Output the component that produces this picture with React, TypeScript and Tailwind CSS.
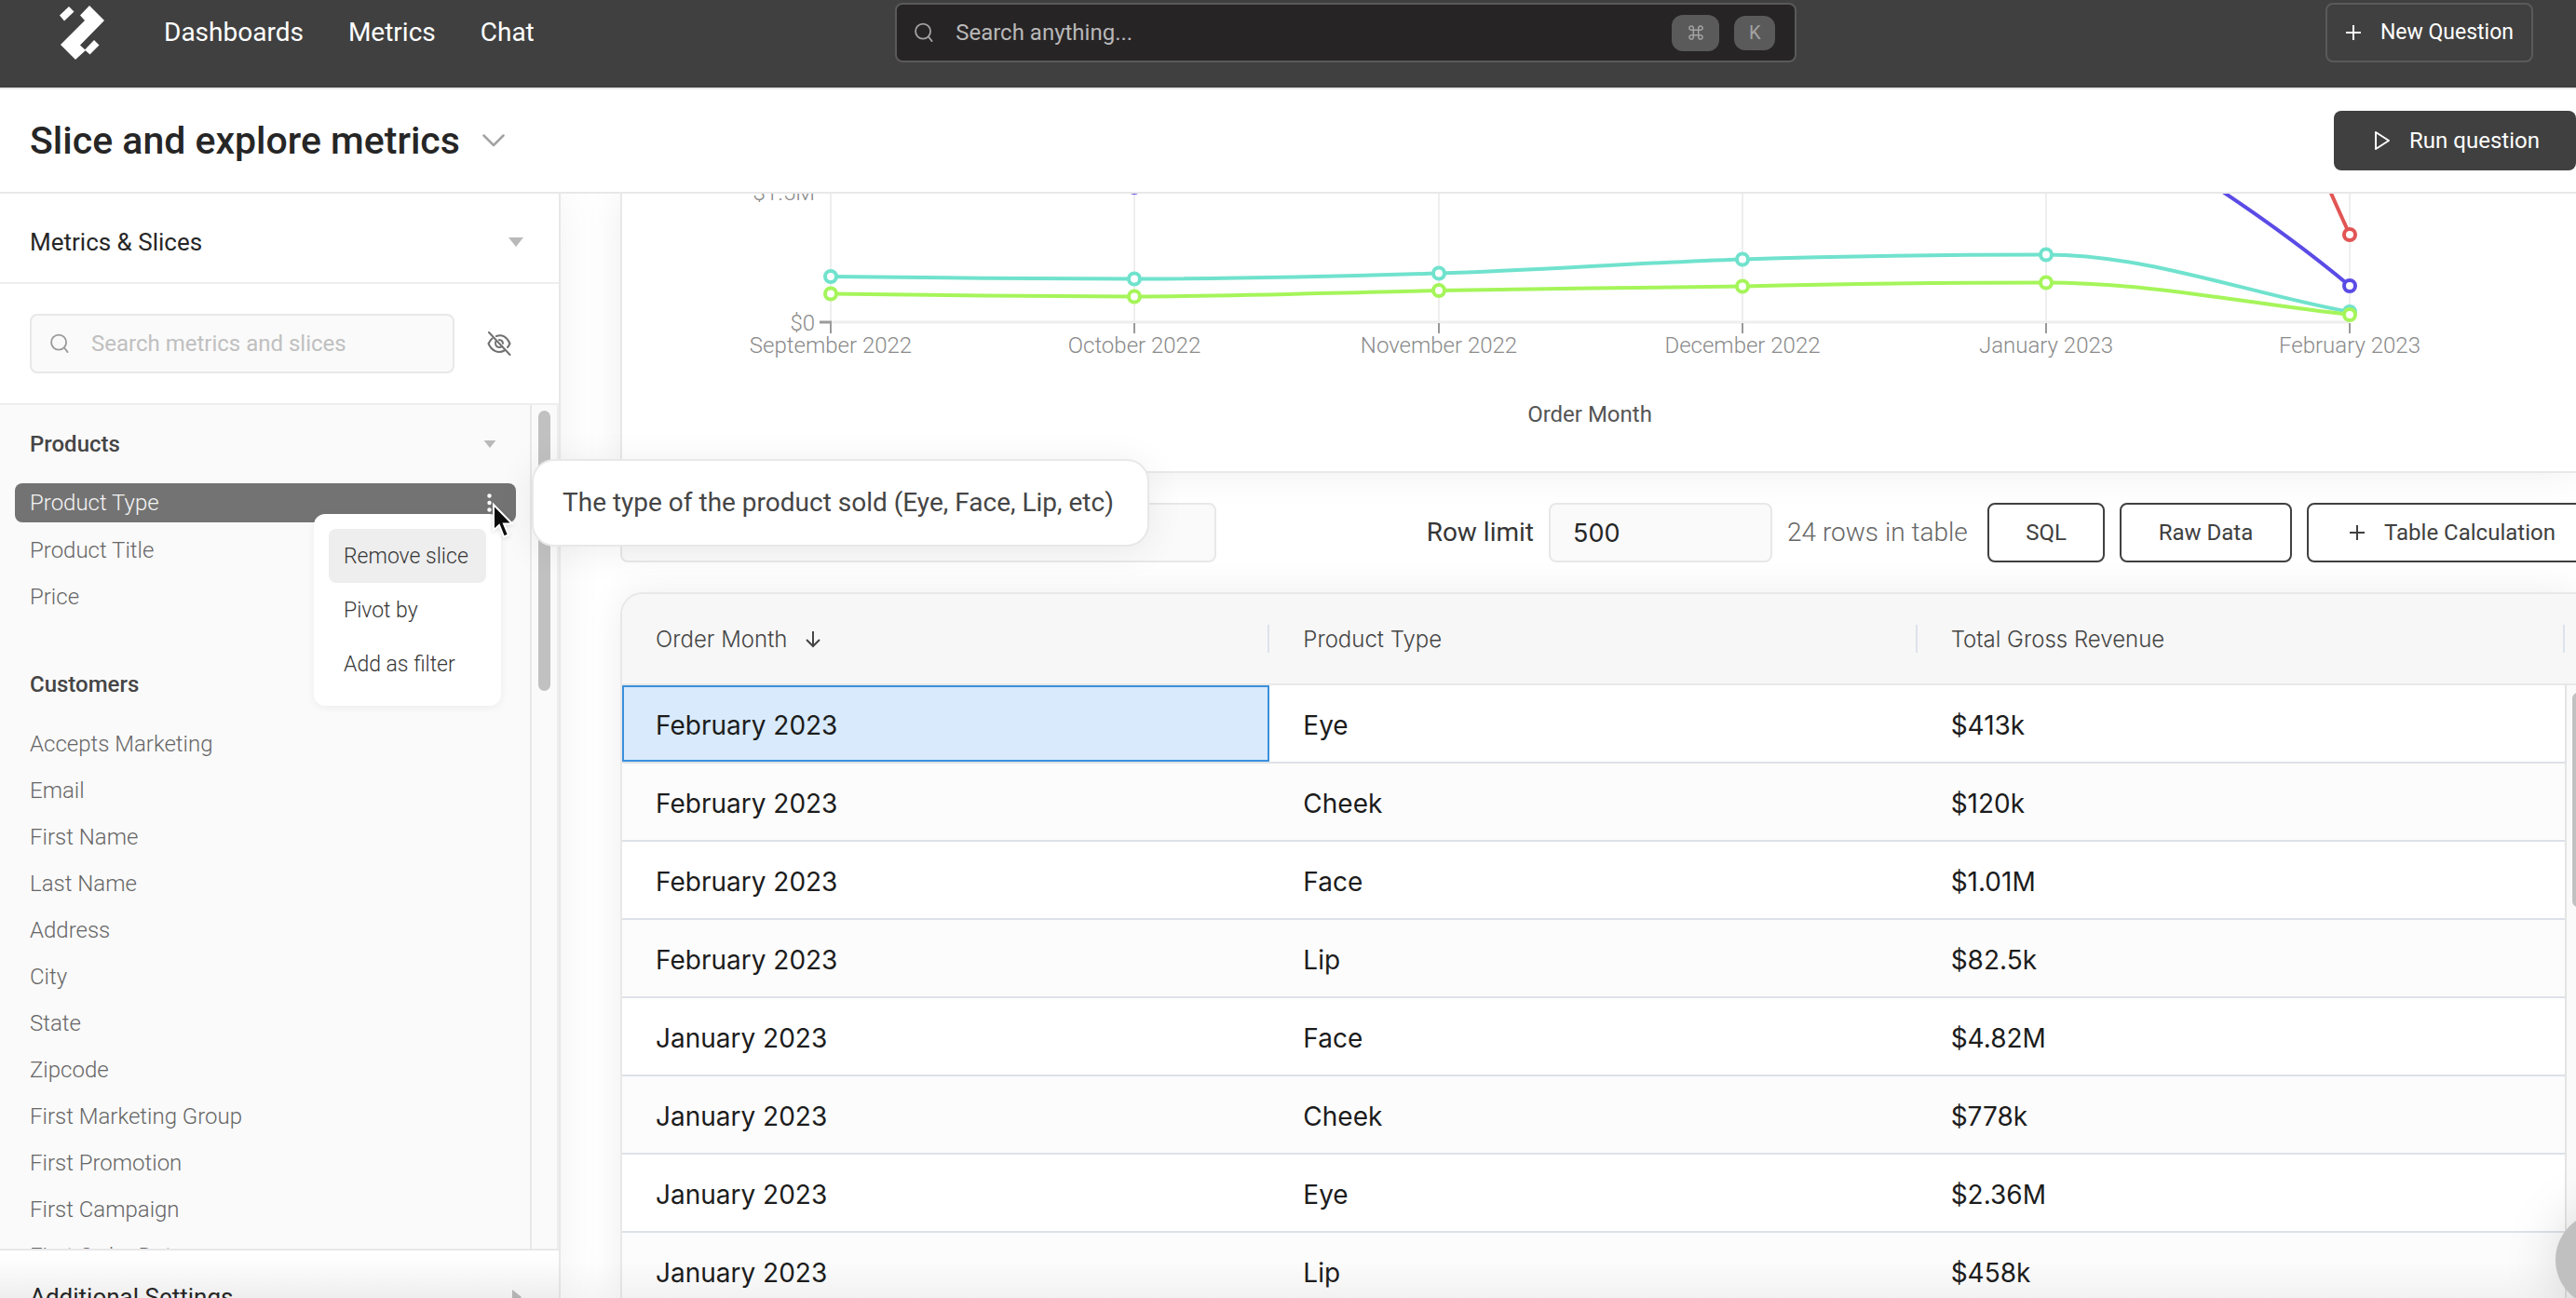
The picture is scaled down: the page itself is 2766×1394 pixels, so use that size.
import React from "react";

const CUSTOMER_SLICES = [
  "Accepts Marketing", "Email", "First Name", "Last Name", "Address", "City", "State", "Zipcode",
  "First Marketing Group", "First Promotion", "First Campaign", "First Order Date",
];

const ROWS = [
  ["February 2023", "Eye", "$413k"],
  ["February 2023", "Cheek", "$120k"],
  ["February 2023", "Face", "$1.01M"],
  ["February 2023", "Lip", "$82.5k"],
  ["January 2023", "Face", "$4.82M"],
  ["January 2023", "Cheek", "$778k"],
  ["January 2023", "Eye", "$2.36M"],
  ["January 2023", "Lip", "$458k"],
];

const MONTHS = ["September 2022", "October 2022", "November 2022", "December 2022", "January 2023", "February 2023"];
const MONTH_X = [224, 550, 877, 1203, 1529, 1855];

function Logo() {
  return (
    <svg viewBox="0 0 48 58" className="h-[58px] w-12 fill-white" aria-label="Home">
      <path d="M10 1 L15.500 6.500 L5 16.500 L0 10.500 Z" />
      <path d="M32 0 L48 16 L22 42.500 L28 48 L17 58 L1 42 L27 16 L22 10.500 Z" />
      <path d="M37 37 L42.500 42.500 L32.500 52.500 L27 47.500 Z" />
    </svg>
  );
}

function SearchIcon({ className }: { className: string }) {
  return (
    <svg viewBox="0 0 22 24" className={className} fill="none" stroke="currentColor" strokeWidth="2" strokeLinecap="round">
      <circle cx="10" cy="10.500" r="8.800" />
      <path d="M16.500 17 L20.500 22" />
    </svg>
  );
}

function PlusIcon({ className }: { className: string }) {
  return (
    <svg viewBox="0 0 18 18" className={className} fill="none" stroke="currentColor" strokeWidth="2">
      <path d="M9 1 V17 M1 9 H17" />
    </svg>
  );
}

function EyeOffIcon() {
  return (
    <svg viewBox="0 0 26 26" className="size-[26px]" fill="none" stroke="#707070" strokeWidth="2" strokeLinecap="round">
      <path d="M2 1 L24.500 25" />
      <path d="M10 5 C16 2.500 21.500 6 24.500 13 C23.800 14.500 23 15.800 22 17" />
      <path d="M5.500 7.500 C3.800 9 2.500 11 1.500 13 C5 21 12 24 18.500 20.500" />
      <path d="M9.500 10.500 C8 13 9.500 17 13 17 C14.200 17 15.200 16.500 15.800 15.800" />
      <path d="M13 9 C15.500 9.200 16.800 10.800 17 12.800" />
    </svg>
  );
}

function Triangle({ className }: { className: string }) {
  return (
    <svg viewBox="0 0 16 10" className={className} fill="#b9b9b9">
      <path d="M0 0 H16 L8 10 Z" />
    </svg>
  );
}

function Cursor() {
  return (
    <svg viewBox="0 0 24 38" className="pointer-events-none absolute top-[22px] left-[512px] z-30 h-[38px] w-6 overflow-visible drop-shadow-sm">
      <path d="M2 1 V28.500 L8 23 L13 35.500 L18 33.500 L13 21.500 H22 Z" fill="#0a0a0a" stroke="#fff" strokeWidth="2" />
    </svg>
  );
}

function Header() {
  return (
    <header className="flex h-24 shrink-0 items-start border-b-2 border-[#e8e8e8] bg-[#404040] text-white">
      <div className="flex w-[34.75%] items-center pt-1.5 pl-16">
        <Logo />
        <nav className="ml-16 flex gap-12 text-[28px] leading-8">
          <a href="#dashboards">Dashboards</a>
          <a href="#metrics">Metrics</a>
          <a href="#chat">Chat</a>
        </nav>
      </div>
      <label className="mt-[3px] flex h-16 w-[35%] items-center rounded-lg border-2 border-[#5a5a5a] bg-[#272425] pr-[21px] pl-[19px] text-[#a3a3a3]">
        <SearchIcon className="h-[22px] w-5" />
        <input aria-label="Search anything" placeholder="Search anything..." className="ml-6 min-w-0 flex-1 bg-transparent text-[24px] outline-none placeholder:text-[#b8b8b8]" />
        <kbd className="flex h-[39px] w-[51px] items-center justify-center rounded-xl bg-[#5a5a5a]">
          <svg viewBox="0 0 16 16" className="size-4" fill="none" stroke="currentColor" strokeWidth="1.500">
            <path d="M5.300 5.300 H10.700 V10.700 H5.300 Z M5.300 5.300 H3.200 A2.200 2.200 0 1 1 5.300 3.200 Z M10.700 5.300 V3.200 A2.200 2.200 0 1 1 12.800 5.300 Z M10.700 10.700 H12.800 A2.200 2.200 0 1 1 10.700 12.800 Z M5.300 10.700 V12.800 A2.200 2.200 0 1 1 3.200 10.700 Z" />
          </svg>
        </kbd>
        <kbd className="ml-4 flex h-[37px] w-11 items-center justify-center rounded-xl bg-[#5a5a5a] font-[Roboto,sans-serif] text-[20px] leading-6">K</kbd>
      </label>
      <div className="flex flex-1 justify-end pt-[3px] pr-[46px]">
        <button className="flex h-16 w-[223px] items-center justify-center rounded-lg border-2 border-[#5a5a5a] text-[23px] leading-8">
          <PlusIcon className="mr-5 size-[18px]" />
          New Question
        </button>
      </div>
    </header>
  );
}

function TitleBar() {
  return (
    <div className="flex h-28 shrink-0 items-center justify-between border-b-2 border-[#e8e8e8] bg-white pl-8">
      <button className="flex items-center gap-6">
        <h1 className="text-[41px] leading-[48px] font-medium text-[#262626]">Slice and explore metrics</h1>
        <svg viewBox="0 0 24 14" className="h-3.5 w-6" fill="none" stroke="#a3a3a3" strokeWidth="2.500" strokeLinecap="round" strokeLinejoin="round">
          <path d="M1.500 1.500 L12 12 L22.500 1.500" />
        </svg>
      </button>
      <button className="flex h-16 w-[260px] items-center justify-center rounded-lg bg-[#404040] pl-1 text-[24px] leading-8 text-white">
        <svg viewBox="0 0 18 22" className="mr-5 h-[22px] w-[18px]" fill="none" stroke="currentColor" strokeWidth="2" strokeLinejoin="round">
          <path d="M2 2 L16 11 L2 20 Z" />
        </svg>
        Run question
      </button>
    </div>
  );
}

function SliceItem({ label }: { label: string }) {
  return (
    <li>
      <button className="block h-[50px] w-full px-4 text-left leading-[52px]">{label}</button>
    </li>
  );
}

function SliceMenu() {
  return (
    <div role="menu" className="absolute top-[33px] left-[321px] z-20 w-[201px] rounded-xl bg-white p-4 text-[23px] leading-[60px] text-[#363636] shadow-[0_2px_8px_rgba(0,0,0,0.06)]">
      <button role="menuitem" className="block h-[58px] w-full rounded-lg bg-[#eeeeee] pl-4 text-left">Remove slice</button>
      <button role="menuitem" className="block h-[58px] w-full pl-4 text-left">Pivot by</button>
      <button role="menuitem" className="block h-[58px] w-full pl-4 text-left">Add as filter</button>
    </div>
  );
}

function Sidebar() {
  return (
    <aside className="relative z-10 flex w-[602px] shrink-0 flex-col border-r-2 border-[#e8e8e8] bg-white shadow-[0_0_48px_rgba(0,0,0,0.06)]">
      <button className="flex h-[97px] shrink-0 items-center justify-between border-b-2 border-[#eeeeee] pt-2 pr-[38px] pl-8">
        <span className="text-[26px] leading-8 text-[#262626]">Metrics &amp; Slices</span>
        <Triangle className="h-2.5 w-4" />
      </button>
      <div className="flex h-[130px] shrink-0 items-center border-b-2 border-[#eeeeee] pl-8">
        <label className="flex h-16 w-[456px] items-center rounded-lg border-2 border-[#e8e8e8] bg-[#fafafa] pl-5 text-[#9a9a9a]">
          <SearchIcon className="h-[22px] w-5" />
          <input aria-label="Search metrics and slices" placeholder="Search metrics and slices" className="ml-6 min-w-0 flex-1 bg-transparent text-[24px] outline-none placeholder:text-[#c0c0c0]" />
        </label>
        <button aria-label="Hide unused" className="ml-[35px]">
          <EyeOffIcon />
        </button>
      </div>
      <div className="flex min-h-0 flex-1 overflow-hidden bg-[#fafafa]">
        <div className="w-[571px] border-r-2 border-[#e8e8e8] pt-4 pr-[15px] pl-4 text-[24px] font-light text-[#666666]">
          <button className="flex h-[52px] w-full items-center justify-between pr-[21px] pl-4">
            <span className="font-medium text-[#454545]">Products</span>
            <Triangle className="h-2 w-3.5" />
          </button>
          <ul className="mt-4">
            <li className="relative h-[46px]">
              <div className="flex h-[42px] items-center justify-between rounded-lg bg-[#737373] pr-[26px] pl-4 text-[#f5f5f5]">
                <button className="leading-[44px]">Product Type</button>
                <button aria-label="Slice options">
                  <svg viewBox="0 0 5 20" className="h-5 w-[5px]" fill="#fff">
                    <circle cx="2.500" cy="2.500" r="2.200" />
                    <circle cx="2.500" cy="10" r="2.200" />
                    <circle cx="2.500" cy="17.500" r="2.200" />
                  </svg>
                </button>
              </div>
              <SliceMenu />
              <Cursor />
            </li>
            <SliceItem label="Product Title" />
            <SliceItem label="Price" />
          </ul>
          <button className="mt-11 flex h-[52px] w-full items-center pl-4 font-medium text-[#454545]">Customers</button>
          <ul className="mt-3">
            {CUSTOMER_SLICES.map((label) => (
              <SliceItem key={label} label={label} />
            ))}
          </ul>
        </div>
        <div className="flex-1 border-r-2 border-[#eeeeee] px-[7px] pt-1.5">
          <div className="h-[301px] rounded-full bg-[#c1c1c1]" />
        </div>
      </div>
      <button className="relative -mb-[45px] flex h-[98px] shrink-0 items-center justify-between border-t-2 border-[#e8e8e8] bg-linear-to-b from-white to-[#f2f2f2] pt-1 pr-[40px] pl-8">
        <span className="text-[26px] leading-8 text-[#262626]">Additional Settings</span>
        <svg viewBox="0 0 10 16" className="h-4 w-2.5" fill="#b9b9b9">
          <path d="M0 0 L10 8 L0 16 Z" />
        </svg>
      </button>
      <div role="tooltip" className="absolute top-[285px] left-[571px] rounded-3xl border-2 border-[#e8e8e8] bg-white py-[29px] pr-9 pl-[31px] text-[28px] leading-8 whitespace-nowrap text-[#454545] shadow-[0_4px_40px_rgba(0,0,0,0.07)]">
        The type of the product sold (Eye, Face, Lip, etc)
      </div>
    </aside>
  );
}

function Series({ color, d, points }: { color: string; d: string; points: number[][] }) {
  return (
    <g stroke={color} strokeWidth="4">
      <path d={d} fill="none" />
      {points.map(([x, y]) => (
        <circle key={x} cx={x} cy={y} r="6" fill="#fff" />
      ))}
    </g>
  );
}

function Chart() {
  return (
    <section className="overflow-hidden border-b-2 border-l-2 border-[#e8e8e8] bg-white shadow-[0_0_40px_rgba(0,0,0,0.07)]">
      <svg viewBox="0 0 2098 298" className="block w-full font-[Roboto,sans-serif]" fontSize="24">
        <g stroke="#eeeeee" strokeWidth="2">
          {MONTH_X.map((x) => (
            <path key={x} d={`M${x} 0 V138`} />
          ))}
          <path d="M224 138 H1855" strokeWidth="3" />
        </g>
        <g stroke="#9a9a9a" strokeWidth="2">
          {MONTH_X.map((x) => (
            <path key={x} d={`M${x} 139 V150`} />
          ))}
          <path d="M212 138 H225" strokeWidth="3" />
        </g>
        <g fill="#8a8a8a" fontWeight="300">
          <text x="207" y="7" textAnchor="end">$1.5M</text>
          <text x="207" y="147" textAnchor="end">$0</text>
          {MONTHS.map((m, i) => (
            <text key={m} x={MONTH_X[i]} y="171" textAnchor="middle">{m}</text>
          ))}
        </g>
        <text x="1039" y="245" textAnchor="middle" fill="#555555">Order Month</text>
        <Series color="#e25555" d="M1799 -120 C1806 -60 1826 -20 1855 44" points={[[1855, 44]]} />
        <Series color="#5b4be6" d="M1660 -40 C1740 10 1806 58 1855 99" points={[[550, -7], [1855, 99]]} />
        <Series
          color="#70e2cd"
          d="M224 89 C333 90 441 91.500 550 91.500 C659 91.500 768 89 877 85.500 C986 82 1094 74 1203 70.500 C1312 67 1420 65.500 1529 65.500 C1638 65.500 1746 107 1855 127"
          points={[[224, 89], [550, 91.5], [877, 85.5], [1203, 70.5], [1529, 65.5], [1855, 127]]}
        />
        <Series
          color="#a5f55a"
          d="M224 107.500 C333 109 441 110.500 550 110.500 C659 110.500 768 106 877 104 C986 102 1094 101 1203 99.500 C1312 97 1420 95.500 1529 95.500 C1638 95.500 1746 118 1855 130"
          points={[[224, 107.5], [550, 110.5], [877, 104], [1203, 99.5], [1529, 95.5], [1855, 130]]}
        />
      </svg>
    </section>
  );
}

function Toolbar() {
  return (
    <div className="mt-8 -mr-[23px] flex h-16 items-center gap-4 text-[28px] leading-8">
      <select aria-label="Visible columns" className="h-16 w-[640px] appearance-none rounded-lg border-2 border-[#e8e8e8] bg-[#fafafa]" />
      <label className="ml-auto flex items-center gap-4 text-[#363636]">
        Row limit
        <input defaultValue="500" className="h-16 w-60 rounded-lg border-2 border-[#e8e8e8] bg-[#fafafa] px-6 font-[Inter,sans-serif] text-[27px] text-[#262626]" />
      </label>
      <span className="w-[199px] font-light whitespace-nowrap text-[#666666]">24 rows in table</span>
      <button className="h-16 w-[126px] rounded-lg border-2 border-[#404040] bg-white text-[24px] text-[#404040]">SQL</button>
      <button className="h-16 w-[185px] rounded-lg border-2 border-[#404040] bg-white text-[24px] text-[#404040]">Raw Data</button>
      <button className="flex h-16 w-[312px] items-center justify-center rounded-lg border-2 border-[#404040] bg-white text-[24px] text-[#404040]">
        <PlusIcon className="mr-5 size-[18px]" />
        Table Calculation
      </button>
    </div>
  );
}

function ResultsTable() {
  return (
    <section className="mt-8 flex flex-1 flex-col overflow-hidden rounded-tl-3xl border-t-2 border-l-2 border-[#e8e8e8] bg-[#fafafa] shadow-[0_0_40px_rgba(0,0,0,0.07)]">
      <div className="relative">
        <table className="w-full table-fixed border-separate border-spacing-0 font-[Inter,sans-serif]">
          <colgroup>
            <col />
            <col />
            <col />
            <col className="w-3" />
          </colgroup>
          <thead>
            <tr className="bg-[#f7f7f7] text-left text-[24px] text-[#454545]">
              {["Order Month", "Product Type", "Total Gross Revenue"].map((h) => (
                <th key={h} className="h-[98px] border-b-2 border-[#e8e8e8] p-0 font-light">
                  <div className="flex h-[30px] items-center border-r-2 border-[#dde2eb] pt-0.5 pl-9">
                    {h}
                    {h === "Order Month" && (
                      <svg viewBox="0 0 16 18" className="ml-5 h-[18px] w-4" fill="none" stroke="#454545" strokeWidth="2">
                        <path d="M8 0 V16 M1 9 L8 16 L15 9" />
                      </svg>
                    )}
                  </div>
                </th>
              ))}
              <th aria-label="Scroll" className="border-b-2 border-[#e8e8e8] p-0" />
            </tr>
          </thead>
          <tbody>
            {ROWS.map((row, r) => (
              <tr key={r} className="bg-white text-[28px] text-[#1c1c1c] even:bg-[#fcfcfc]">
                {row.map((cell, c) => (
                  <td key={c} className="h-[84px] border-b-2 border-[#dde2e8] p-0">
                    {r === 0 && c === 0 ? (
                      <div className="flex h-[82px] items-center border-2 border-[#3b90dc] bg-[#d8eafb] pt-1 pl-[34px]">{cell}</div>
                    ) : (
                      <div className="pt-1 pl-9">{cell}</div>
                    )}
                  </td>
                ))}
                <td className="border-l-2 border-[#e4e4e4] bg-[#fafafa] p-0" />
              </tr>
            ))}
          </tbody>
        </table>
        <div className="absolute top-[106px] -right-2 h-[230px] w-3 rounded-full bg-[#c1c1c1]" />
      </div>
    </section>
  );
}

export default function App() {
  return (
    <div className="relative flex h-screen flex-col overflow-hidden bg-white font-[Roboto,sans-serif]">
      <Header />
      <TitleBar />
      <div className="flex min-h-0 flex-1 overflow-hidden">
        <Sidebar />
        <main className="flex min-w-0 flex-1 flex-col pl-16">
          <Chart />
          <Toolbar />
          <ResultsTable />
        </main>
      </div>
      <div className="pointer-events-none absolute inset-x-0 bottom-0 z-20 h-10 bg-linear-to-b from-transparent to-black/4" />
      <button aria-label="Open chat" className="absolute -right-20 -bottom-[10px] z-30 size-[102px] rounded-full bg-[#c0c0c0] shadow-[0_0_60px_rgba(0,0,0,0.15)]" />
    </div>
  );
}
